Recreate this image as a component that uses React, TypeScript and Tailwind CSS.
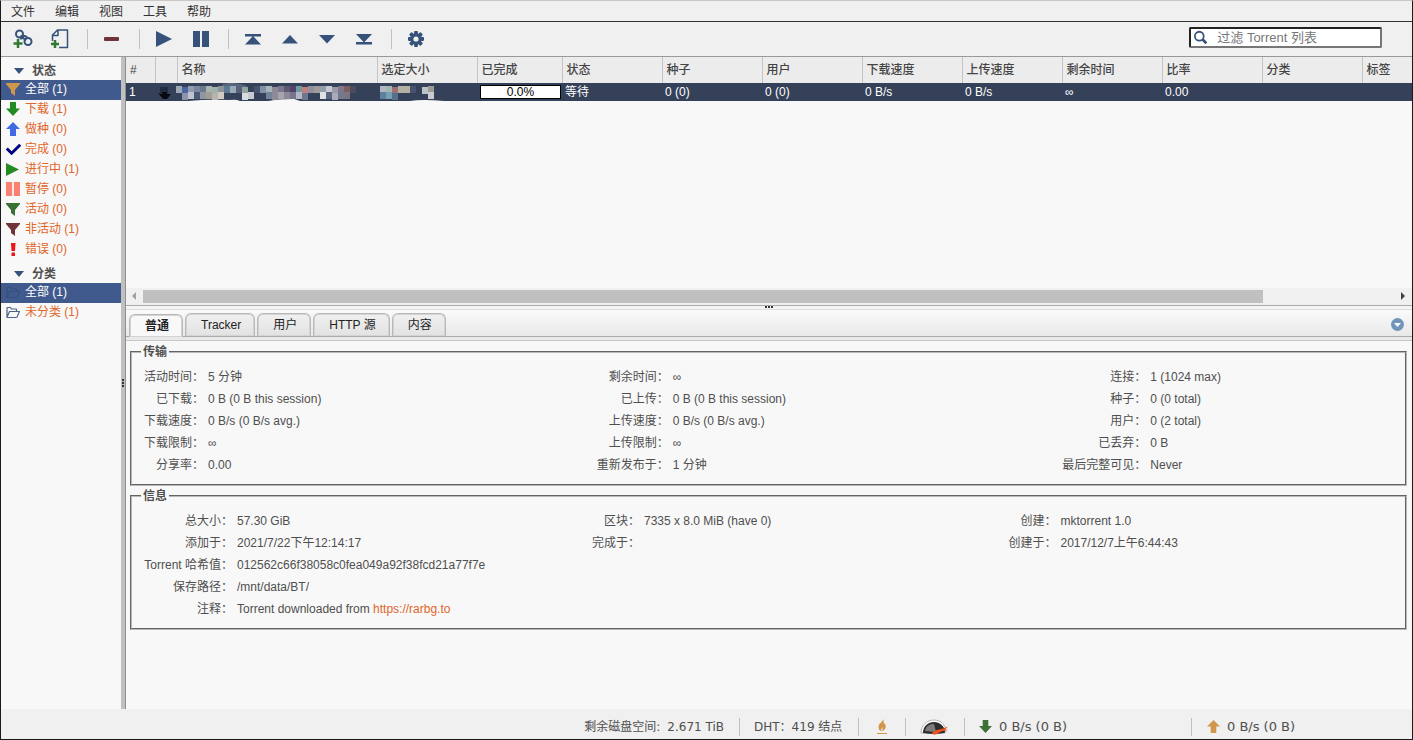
import { useState, ReactNode } from 'react';
import clsx from 'clsx';
import { FaCheck } from 'react-icons/fa';

// --- ICONS ---

const BLUE = '#36527a';

const Funnel = ({ color }: { color: string }) => (
  <svg width="14" height="14" viewBox="0 0 14 14" fill={color}>
    <path d="M0 1h14v1L9 8v6L5 11V8L0 2z" />
  </svg>
);

const Arrow = ({ color, up, size = 14 }: { color: string; up?: boolean; size?: number }) => (
  <svg width={size} height={size} viewBox="0 0 14 14" fill={color}>
    <path d={up ? 'M7 0l7 7H10v7H4V7H0z' : 'M4 0h6v6.500h4L7 14 0 6.500h4z'} />
  </svg>
);

const Play = ({ color, size }: { color: string; size: number }) => (
  <svg width={size} height={size} viewBox="0 0 16 16" fill={color}>
    <path d="M0 0l16 8-16 8z" />
  </svg>
);

const Pause = ({ color, size }: { color: string; size: number }) => (
  <svg width={size} height={size} viewBox="0 0 16 16" fill={color}>
    <path d="M0 0h7v16H0zM9 0h7v16H9z" />
  </svg>
);

const Error = () => (
  <svg width="14" height="14" viewBox="0 0 14 14" fill="#f01414">
    <path d="M5 1h4.500L9 9H5.500zM5.500 10.500H9V14H5.500z" />
  </svg>
);

const Folder = ({ color }: { color: string }) => (
  <svg width="14" height="14" viewBox="0 0 14 14" fill="none" stroke={color} strokeWidth="1.200" strokeLinejoin="round">
    <path d="M1 12V3q0-.5.5-.5h3l1 1.500H10q.5 0 .5.500v2M1 12l2.500-5.500H13.500L11 12q-.3.500-1 .5H1z" />
  </svg>
);

const AddLink = () => (
  <svg width="20" height="20" viewBox="0 0 20 20" fill="none">
    <g stroke={BLUE} strokeWidth="2">
      <circle cx="6.500" cy="5" r="3.500" />
      <circle cx="15" cy="12.500" r="3.500" />
      <path d="M8 10.500Q8 7.500 11 7q2.500-.2 3 2M7.500 6.500l5.500 5" />
    </g>
    <path d="M5 10v9M.5 14.500h9" stroke="#2f7a2f" strokeWidth="2.500" />
  </svg>
);

// page with the folded corner on the left and a plus over its lower edge
const AddFile = () => (
  <svg width="20" height="20" viewBox="0 0 20 20" fill="none">
    <path d="M2.500 12V6l5-5h10v17.500H9M2.500 6.500H8V1" stroke={BLUE} strokeWidth="1.500" strokeLinejoin="round" />
    <path d="M5 11v8M1 15h8" stroke="#2f7a2f" strokeWidth="2.500" />
  </svg>
);

const Move = ({ d }: { d: string }) => (
  <svg width="18" height="14" viewBox="0 0 18 14" fill={BLUE}>
    <path d={d} />
  </svg>
);

const Gear = () => (
  <svg width="16" height="16" viewBox="-8 -8 16 16">
    {[0, 45, 90, 135].map((a) => (
      <rect key={a} x="-1.900" y="-8" width="3.800" height="16" rx="0.800" fill={BLUE} transform={`rotate(${a})`} />
    ))}
    <circle r="5.800" fill={BLUE} />
    <circle r="2.600" fill="#f0f0f0" />
  </svg>
);

const Flame = () => (
  <svg width="12" height="16" viewBox="0 0 12 16" fill="#d0964b">
    <path d="M7 0C7 3 2.500 4 2.500 8c0 2 1 3.500 3 4.500C5 11 5.300 9.500 6.300 8c.3 1.500.3 2.500-.1 4.200C8.800 11 10.200 9 9.600 6.500 9.400 5.300 8.800 5 8.800 4c-.5.500-.7 1-.8 1.600C7.600 3.500 8 2 7 0z" />
    <path d="M1 14h10v1H1z" />
  </svg>
);

const Gauge = () => (
  <svg width="30" height="16" viewBox="0 0 30 16">
    <path d="M1 14C1 6 7 1 14 1s12 5 12 12z" fill="#fff" stroke="#b4b4b4" />
    <path d="M3 14C3 7 8 3 14 3s11 4 11 11q-11 2-22 0z" fill="#2e2e2e" />
    <path d="M5 12C6 7 9 5 14 5l2 8z" fill="#7c7c7c" />
    <path d="M12 14l3-2.500 8-2 5-2-3 3 3 .5-7 1.500-5 3h-3z" fill="#ee5220" />
  </svg>
);

// --- DATA ---

const COLON = '\uff1a';

const MENUS = ['文件', '编辑', '视图', '工具', '帮助'];

const STATUS_FILTERS: { label: string; icon: ReactNode }[] = [
  { label: '全部 (1)', icon: <Funnel color="#d0964b" /> },
  { label: '下载 (1)', icon: <Arrow color="#228b22" /> },
  { label: '做种 (0)', icon: <Arrow color="#4169e1" up /> },
  { label: '完成 (0)', icon: <FaCheck size={15} color="#000080" className="shrink-0" /> },
  { label: '进行中 (1)', icon: <Play color="#228b22" size={13} /> },
  { label: '暂停 (0)', icon: <Pause color="#fa8072" size={14} /> },
  { label: '活动 (0)', icon: <Funnel color="#3a7034" /> },
  { label: '非活动 (1)', icon: <Funnel color="#6e3438" /> },
  { label: '错误 (0)', icon: <Error /> },
];

const CATEGORIES: { label: string; icon: ReactNode }[] = [
  { label: '全部 (1)', icon: <Folder color="#35507c" /> },
  { label: '未分类 (1)', icon: <Folder color="#4d6382" /> },
];

const COLUMNS = [
  { title: '#', width: 'w-[29px]' },
  { title: '', width: 'w-[22px]' },
  { title: '名称', width: 'w-[200px]' },
  { title: '选定大小', width: 'w-[100px]' },
  { title: '已完成', width: 'w-[85px]' },
  { title: '状态', width: 'w-[100px]' },
  { title: '种子', width: 'w-[100px]' },
  { title: '用户', width: 'w-[100px]' },
  { title: '下载速度', width: 'w-[100px]' },
  { title: '上传速度', width: 'w-[100px]' },
  { title: '剩余时间', width: 'w-[100px]' },
  { title: '比率', width: 'w-[100px]' },
  { title: '分类', width: 'w-[100px]' },
  { title: '标签', width: 'w-[100px]' },
];

const TABS = ['普通', 'Tracker', '用户', 'HTTP 源', '内容'];

const TRANSFER = [
  ['活动时间', '5 分钟', '剩余时间', '∞', '连接', '1 (1024 max)'],
  ['已下载', '0 B (0 B this session)', '已上传', '0 B (0 B this session)', '种子', '0 (0 total)'],
  ['下载速度', '0 B/s (0 B/s avg.)', '上传速度', '0 B/s (0 B/s avg.)', '用户', '0 (2 total)'],
  ['下载限制', '∞', '上传限制', '∞', '已丢弃', '0 B'],
  ['分享率', '0.00', '重新发布于', '1 分钟', '最后完整可见', 'Never'],
];

const INFO = [
  ['总大小', '57.30 GiB', '区块', '7335 x 8.0 MiB (have 0)', '创建', 'mktorrent 1.0'],
  ['添加于', '2021/7/22下午12:14:17', '完成于', '', '创建于', '2017/12/7上午6:44:43'],
  ['Torrent 哈希值', '012562c66f38058c0fea049a92f38fcd21a77f7e'],
  ['保存路径', '/mnt/data/BT/'],
  ['注释', 'Torrent downloaded from '],
];

// Pixelated name: two rows of colour cells, 6px each
const MOSAIC = [
  ['#9fa6b8', '#4a67a0', '#8e9bb0', '#7b889b', '#6b788c', '#a7b5ae', '#9fb3a8', '#8f9298', '#5a7a94', '#9aa9b6', '#56607a', '#8fa6a0', '', '#465270', '#7f93a2', '#a8b4bd', '#8d8a96', '#7c7690', '#5d5a70', '#56406f', '#6f9aa0', '#c0807f', '#8f8f9f', '#a19a9a', '#8f9fae', '#c7c9d2', '#9a9aab', '#80788a', '#7a6062', '#4b4c5f', '', '', '', '', '#b2b6c2', '#9fb7b0', '#a06f74', '#b0b2a8', '#b5b19c', '#465270', '', '#b9c2c6', '#9f9a91'],
  ['', '#8c93ab', '#c0c4d2', '#4c5a78', '#8f98a0', '#9f9d96', '#b8b3ad', '#cfc9c4', '', '', '', '#d9dce1', '#c6cad2', '', '', '#71859a', '#8b8b9c', '#a9a3ab', '#8d8898', '#77758e', '#b5b7c6', '#6d7890', '', '', '#e0e2e6', '#59647e', '#a8abb9', '#75798e', '#7c7580', '', '', '', '', '', '#5f7f9f', '#76a0b6', '#56708d', '', '', '', '', '', '#c9cbd0'],
];

// --- PARTS ---

function ToolButton({ label, children }: { label: string; children: ReactNode }) {
  return (
    <button aria-label={label} className="flex h-8 w-[37px] items-center justify-center">
      {children}
    </button>
  );
}

const Separator = () => <span className="mr-[5px] ml-[9px] h-5 w-px bg-[#c0c0c0]" />;

function FilterList({ title, items }: { title: string; items: { label: string; icon: ReactNode }[] }) {
  const [selected, setSelected] = useState(0);
  return (
    <section className="pt-[3px]">
      <h2 className="flex h-5 items-center gap-2 pt-px pl-[13px] font-bold">
        <svg width="10" height="6" viewBox="0 0 10 6" fill={BLUE}>
          <path d="M0 0h10L5 6z" />
        </svg>
        {title}
      </h2>
      <ul>
        {items.map((item, i) => (
          <li key={item.label}>
            <button
              onClick={() => setSelected(i)}
              className={clsx(
                'flex h-5 w-full items-center pb-[2px] pl-[5px]',
                selected === i ? 'bg-[#415a8d] text-white' : 'text-[#e0662a]'
              )}
            >
              <span className="flex w-[19px] items-center">{item.icon}</span>
              {item.label}
            </button>
          </li>
        ))}
      </ul>
    </section>
  );
}

function Details({ title, rows, cols }: { title: string; rows: string[][]; cols: string[] }) {
  return (
    <fieldset className="mb-[2px] border-2 border-[#b8b8b8] px-2 pb-2 [border-style:groove]">
      <legend className="ml-px px-[2px] leading-4 font-bold">{title}</legend>
      <table className="mt-[6px] w-full table-fixed">
        <colgroup>
          {cols.map((c, i) => (
            <col key={i} className={c} />
          ))}
        </colgroup>
        <tbody>
          {rows.map((row) => (
            <tr key={row[0]} className="h-[22px]">
              {row.map((text, i) =>
                i % 2 === 0 ? (
                  <th key={i} className="text-right font-normal whitespace-nowrap">
                    {text + COLON}
                  </th>
                ) : (
                  <td key={i} colSpan={row.length === 2 ? 5 : 1} className="pl-1 whitespace-nowrap">
                    {text}
                    {row[0] === '注释' && (
                      <a href="https://rarbg.to" className="text-[#e0662a]">https://rarbg.to</a>
                    )}
                  </td>
                )
              )}
            </tr>
          ))}
        </tbody>
      </table>
    </fieldset>
  );
}

export default function App() {
  const [tab, setTab] = useState('普通');
  const [filter, setFilter] = useState('');

  return (
    <div
      lang="zh-CN"
      className="flex h-screen flex-col border border-[#1a1a1a] border-t-[#c8c8c8] bg-[#f8f8f8] font-['Liberation_Sans','Noto_Sans_CJK_SC',sans-serif] text-xs text-[#4f4f4f]"
    >
      {/* Menu */}
      <nav className="flex h-[21px] shrink-0 items-center border-b border-[#333] bg-[#f0f0f0] pt-[2px] text-[#333]">
        {MENUS.map((m) => (
          <button key={m} className="w-11 text-center">{m}</button>
        ))}
      </nav>

      {/* Toolbar */}
      <header className="flex h-[35px] shrink-0 items-center border-b border-[#999] bg-[#f0f0f0] pl-[3px]">
        <ToolButton label="添加链接"><AddLink /></ToolButton>
        <ToolButton label="添加文件"><AddFile /></ToolButton>
        <Separator />
        <ToolButton label="删除">
          <span className="h-1 w-[15px] rounded-[1px] bg-[#6e3438]" />
        </ToolButton>
        <Separator />
        <ToolButton label="继续"><Play color={BLUE} size={16} /></ToolButton>
        <ToolButton label="暂停"><Pause color={BLUE} size={16} /></ToolButton>
        <Separator />
        <ToolButton label="置顶"><Move d="M1 2h16v2.500H1zM9 4l8 8.500H1z" /></ToolButton>
        <ToolButton label="上移"><Move d="M9 3l8 8.500H1z" /></ToolButton>
        <ToolButton label="下移"><Move d="M1 3h16l-8 8.500z" /></ToolButton>
        <ToolButton label="置底"><Move d="M1 2h16l-8 8.500zM1 10h16v2.500H1z" /></ToolButton>
        <Separator />
        <ToolButton label="选项"><Gear /></ToolButton>

        <label className="mr-[30px] mb-[3px] ml-auto flex h-[21px] w-[193px] items-center rounded-[2px] border-2 border-[#767676] border-t-[#222] border-l-[#222] bg-white pl-[3px]">
          <svg width="15" height="15" viewBox="0 0 15 15" fill="none" stroke={BLUE} strokeWidth="2">
            <circle cx="6" cy="6" r="5" />
            <path d="M9.500 9.500l4.500 4.500" strokeWidth="3" />
          </svg>
          <input
            type="text"
            aria-label="过滤 Torrent 列表"
            placeholder="过滤 Torrent 列表"
            value={filter}
            onChange={(e) => setFilter(e.target.value)}
            className="ml-2 w-full min-w-0 pl-[2px] text-[13px] outline-none placeholder:text-[#777]"
          />
        </label>
      </header>

      <div className="flex min-h-0 flex-1">
        {/* Filters */}
        <aside className="w-[120px] shrink-0">
          <FilterList title="状态" items={STATUS_FILTERS} />
          <FilterList title="分类" items={CATEGORIES} />
        </aside>
        <div className="flex w-[5px] shrink-0 items-center justify-center border-r border-[#8f8f8f] bg-[#c0c0c0]">
          <span className="flex flex-col gap-px">
            <i className="size-[2px] bg-[#333]" />
            <i className="size-[2px] bg-[#333]" />
            <i className="size-[2px] bg-[#333]" />
          </span>
        </div>

        <main className="flex min-w-0 flex-1 flex-col">
          {/* Torrent list */}
          <div className="flex h-[38%] shrink-0 flex-col">
            <div className="min-h-0 flex-1 overflow-hidden">
              <table className="w-[1336px] table-fixed">
                <thead>
                  <tr className="h-[26px] bg-[#ececec]">
                    {COLUMNS.map((c, i) => (
                      <th key={i} className={clsx('border-l border-[#c4c4c4] pl-1 text-left font-medium text-[#444] first:border-l-0', c.width)}>
                        {c.title}
                      </th>
                    ))}
                  </tr>
                </thead>
                <tbody>
                  <tr className="h-[18px] bg-[#354158] leading-4 text-white *:p-0 *:pl-[3px]">
                    <td>1</td>
                    <td>
                      <svg width="14" height="16" viewBox="1 -2 14 16">
                        <path d="M3 1h8v6H3z" fill="#222c40" />
                        <path d="M5 6h5v2h4l-4 5H6L1 7l4 1z" fill="#080a10" />
                      </svg>
                    </td>
                    <td colSpan={2}>
                      <svg width="272" height="18" viewBox="4 0 272 18" className="-ml-1 block">
                        <path d="M50 1q12-3 25 2l-2 3-22-1z" fill="#59647c" />
                        <path d="M16 18q20-2 42-1 6-1 10 1zM96 18q9-2 26-2l6 2zM238 18q12-2 34 0z" fill="#f8f8f8" />
                        {MOSAIC.map((line, y) =>
                          line.map((color, x) =>
                            color ? (
                              <rect key={`${x}-${y}`} x={4 + x * 6} y={3 + y * 6 + (x % 5 === 1 ? 1 : 0)} width="6" height="7" fill={color} />
                            ) : null
                          )
                        )}
                      </svg>
                    </td>
                    <td>
                      <div className="mr-px h-[14px] border border-black bg-white text-center leading-3 text-black">0.0%</div>
                    </td>
                    <td>等待</td>
                    <td>0 (0)</td>
                    <td>0 (0)</td>
                    <td>0 B/s</td>
                    <td>0 B/s</td>
                    <td>∞</td>
                    <td>0.00</td>
                    <td></td>
                    <td></td>
                  </tr>
                </tbody>
              </table>
            </div>
            {/* Horizontal scrollbar */}
            <div className="flex h-[17px] shrink-0 items-center bg-[#f0f0f0]">
              <svg width="17" height="8" viewBox="0 0 17 8" fill="#a0a0a0">
                <path d="M10 0v8L6 4z" />
              </svg>
              <div className="flex flex-1">
                <div className="h-[13px] flex-[17] bg-[#c0c0c0]" />
                <div className="flex-[2]" />
              </div>
              <svg width="17" height="8" viewBox="0 0 17 8" fill="#404040">
                <path d="M6 0v8l4-4z" />
              </svg>
            </div>
          </div>

          <div className="flex h-[5px] shrink-0 items-center justify-center gap-px border-t border-b border-t-[#aaa] border-b-[#ddd] bg-[#f4f4f4]">
            <i className="size-[2px] bg-[#333]" />
            <i className="size-[2px] bg-[#333]" />
            <i className="size-[2px] bg-[#333]" />
          </div>

          {/* Properties panel */}
          <div className="flex h-[27px] shrink-0 items-end gap-[2px] border-b border-[#aaa] bg-linear-to-b from-[#fafafa] to-[#e9e9e9] pr-2 pl-[3px]">
            {TABS.map((t) => (
              <button
                key={t}
                onClick={() => setTab(t)}
                className={clsx(
                  'h-[23px] rounded-t-md border border-b-0 border-[#b8b8b8] pt-px pr-[13px] pl-[15px] text-[#222] shadow-[inset_0_0_0_1px_#d4d4d4]',
                  t === tab ? '-mb-px bg-[#f8f8f8] font-bold' : 'bg-linear-to-b from-[#f0f0f0] to-[#e2e2e2]'
                )}
              >
                {t}
              </button>
            ))}
            <button aria-label="折叠" className="mb-[5px] ml-auto">
              <svg width="13" height="13" viewBox="0 0 13 13">
                <circle cx="6.500" cy="6.500" r="6.500" fill="#7295bb" />
                <path d="M3 5h7L6.500 9z" fill="#fff" />
              </svg>
            </button>
          </div>
          <div className="h-1 shrink-0 border-b border-[#c8c8c8] bg-[#e9e9e9]" />

          <div className="flex-1 overflow-hidden pt-[3px] pr-[5px] pl-1">
            <Details title="传输" rows={TRANSFER} cols={['w-[64px]', 'w-[31%]', 'w-[75px]', 'w-[31%]', 'w-[88px]', '']} />
            <Details title="信息" rows={INFO} cols={['w-[93px]', 'w-[28%]', 'w-[55px]', 'w-[29%]', 'w-[52px]', '']} />
          </div>
        </main>
      </div>

      {/* Status bar */}
      <footer className="flex h-[30px] shrink-0 items-center justify-end bg-[#f0f0f0] pt-[5px] font-['DejaVu_Sans','Noto_Sans_CJK_SC',sans-serif] *:flex *:h-[18px] *:items-center *:border-[#c0c0c0]">
        <span className="gap-1 pr-[15px]">
          <span>剩余磁盘空间:</span>
          <span className="pl-[3px]">2.671 TiB</span>
        </span>
        <span className="w-[119px] border-l pl-[14px] whitespace-nowrap">DHT{COLON}419 结点</span>
        <span className="w-[47px] justify-center border-l"><Flame /></span>
        <span className="w-[59px] justify-center border-l">
          <button aria-label="备用速度限制"><Gauge /></button>
        </span>
        <span className="w-[227px] gap-[7px] border-l pl-[14px] text-[13px]">
          <Arrow color="#3f7038" size={13} />0 B/s (0 B)
        </span>
        <span className="w-[221px] gap-[7px] border-l pl-[15px] text-[13px]">
          <Arrow color="#d0964b" up size={13} />0 B/s (0 B)
        </span>
      </footer>
    </div>
  );
}
